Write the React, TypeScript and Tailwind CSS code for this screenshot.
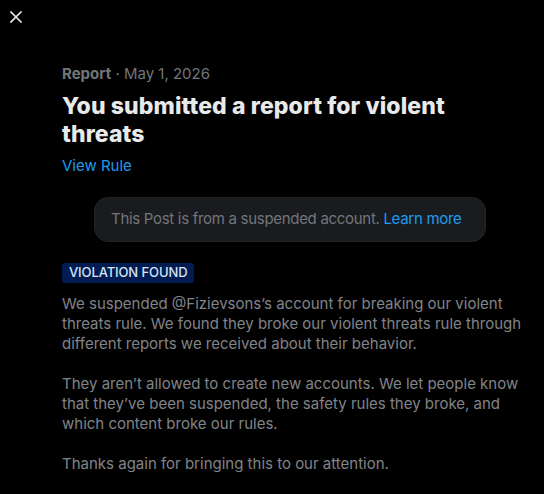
import React from "react";

export default function App() {
  return (
    <div
      className="w-[544px] h-[494px] bg-black overflow-hidden"
      style={{ fontFamily: "Inter, 'Noto Sans', sans-serif" }}
    >
      <div className="h-[34px] pl-[10px] pt-[11px]">
        <svg width="12" height="12" viewBox="0 0 12 12" className="block">
          <path d="M1 1 L11 11 M11 1 L1 11" stroke="#e7e9ea" strokeWidth="1.6" strokeLinecap="square" />
        </svg>
      </div>
      <div className="pl-[62px] pr-[18px] mt-[30px]">
        <div className="text-[15px] leading-[20px] text-[#71767b]">
          <span className="font-bold">Report</span> · May 1, 2026
        </div>
        <h1 className="mt-[8px] text-[23px] leading-[28px] font-extrabold text-[#e7e9ea] tracking-[0.1px]">
          You submitted a report for violent threats
        </h1>
        <div className="mt-[8px] text-[15px] leading-[20px] text-[#1d9bf0]">View Rule</div>
        <div className="ml-[32px] mr-[40px] mt-[21px] h-[45px] rounded-[14px] bg-[#1a1b1f] border border-[#222428] flex items-center pl-[16px] text-[15px] text-[#71767b] whitespace-nowrap tracking-[-0.3px]">
          <span>
            This Post is from a suspended account. <span className="text-[#1d9bf0]">Learn more</span>
          </span>
        </div>
        <div className="mt-[21px] inline-flex items-center h-[20px] px-[7px] rounded-[3px] bg-[#001c52] text-[13px] text-[#d6e4f5] font-medium tracking-[-0.1px]">
          VIOLATION FOUND
        </div>
        <div className="mt-[11px] text-[15px] leading-[20px] text-[#808488]">
          <p>
            We suspended @Fizievsons’s account for breaking our violent threats rule. We found they broke our violent threats rule through different reports we received about their behavior.
          </p>
          <p className="mt-[20px]">
            They aren’t allowed to create new accounts. We let people know that they’ve been suspended, the safety rules they broke, and which content broke our rules.
          </p>
          <p className="mt-[20px]">Thanks again for bringing this to our attention.</p>
        </div>
      </div>
    </div>
  );
}
